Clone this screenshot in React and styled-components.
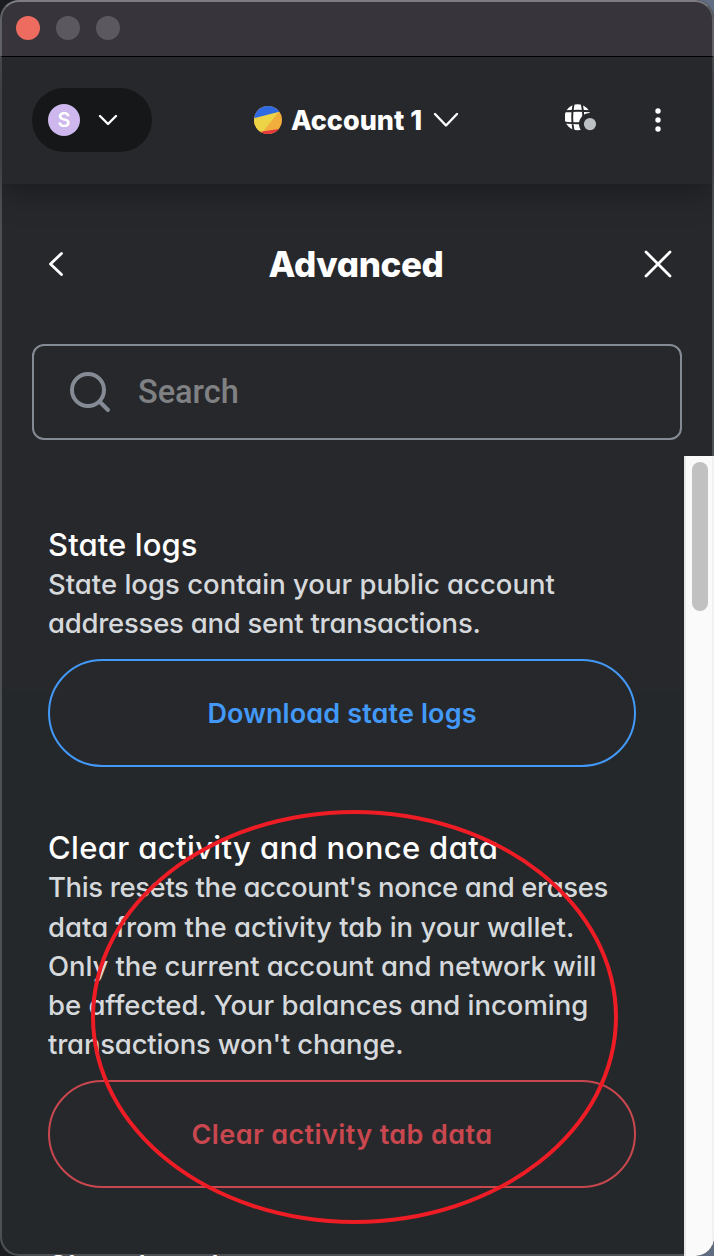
import React from "react";
import styled, { createGlobalStyle } from "styled-components";

const Global = createGlobalStyle`
  * { box-sizing: border-box; }
  html, body { margin: 0; height: 1256px; overflow: hidden; }
  body {
    font-family: Inter, "Liberation Sans", sans-serif;
    font-feature-settings: "cv11" 1;
    background: linear-gradient(90deg, #1b1c1f 0 50%, #5f6c82 50%);
  }
  button { font: inherit; font-feature-settings: inherit; color: inherit; background: none; border: 0; padding: 0; }
  svg { display: block; }
`;

const Window = styled.main`
  position: relative;
  width: 714px;
  height: 1256px;
  border-radius: 19px;
  overflow: hidden;
  display: flex;
  flex-direction: column;
  background: linear-gradient(#27282c 0 692px, #24282b 692px);
  box-shadow: inset 0 0 0 2px #4d5053;
`;

const TitleBar = styled.div`
  position: relative;
  z-index: 1;
  flex: none;
  height: 57px;
  display: flex;
  align-items: center;
  gap: 16px;
  padding: 0 14px 2px;
  border: 2px solid #606165;
  border-top-color: #7d7c81;
  border-bottom: 1px solid #000;
  border-radius: 19px 19px 0 0;
  background: #37353b;
`;

const Light = styled.span`
  width: 24px;
  height: 24px;
  border-radius: 50%;
  background: ${(p) => p.$color};
`;

const Header = styled.header`
  flex: none;
  height: 127px;
  margin: 0 2px;
  padding: 0 30px 1px;
  display: grid;
  grid-template-columns: 120px 1fr 120px;
  align-items: center;
  background: #27282c;
  box-shadow: 0 4px 32px rgba(0, 0, 0, 0.4);
`;

const NetworkPicker = styled.button`
  height: 64px;
  width: 120px;
  padding: 0 16px;
  display: flex;
  align-items: center;
  gap: 18px;
  border-radius: 32px;
  background: #161719;
`;

const NetworkAvatar = styled.span`
  width: 32px;
  height: 32px;
  border-radius: 50%;
  display: grid;
  place-items: center;
  background: #cdb7ec;
  color: #fff;
  font-size: 20px;
  font-weight: 600;
`;

const AccountPicker = styled.button`
  display: flex;
  align-items: center;
  justify-content: center;
  color: #fff;
  font-size: 27px;
  font-weight: 800;
  svg:first-child { margin-right: 9px; }
  svg:last-child { margin: 0 1px 0 11px; }
`;

const HeaderActions = styled.div`
  display: flex;
  align-items: center;
  justify-content: space-between;
  padding: 0 21px 0 3px;
`;

const Line = styled.span`
  display: block;
  width: fit-content;
  white-space: nowrap;
  letter-spacing: ${(p) => p.$track || 0}px;
`;

const PageHeading = styled.div`
  flex: none;
  height: 160px;
  padding: 0 40px 0 44px;
  display: grid;
  grid-template-columns: 32px 1fr 32px;
  align-items: center;
  h1 {
    margin: 0 6px 0 0;
    color: #fff;
    font-size: 35px;
    font-weight: 800;
    display: flex;
    justify-content: center;
  }
`;

const SearchBox = styled.label`
  flex: none;
  height: 96px;
  margin: 0 32px;
  padding: 0 34px;
  display: flex;
  align-items: center;
  gap: 26px;
  border: 2px solid #858b94;
  border-radius: 12px;
  color: #808183;
  font: 500 32.5px Roboto, sans-serif;
`;

const Body = styled.div`
  flex: 1;
  min-height: 0;
  margin-top: 16px;
  display: flex;
`;

const Settings = styled.div`
  flex: 1;
  padding: 69px 48px 0;
  overflow: hidden;
`;

const Setting = styled.section`
  margin-bottom: 61px;
  &:nth-child(2) { margin-bottom: 59px; }
  h2 {
    margin: 0;
    height: 40px;
    color: #fff;
    font-size: 31px;
    font-weight: 450;
    line-height: 40px;
  }
  p {
    margin: 0 0 16px;
    color: #d6d9dc;
    font-size: 27.5px;
    font-weight: 450;
    line-height: 39.2px;
  }
`;

const PillButton = styled.button`
  width: 100%;
  height: 108px;
  display: grid;
  place-items: center;
  border: 2px solid ${(p) => p.$color};
  border-radius: 54px;
  background: #27282c;
  color: ${(p) => p.$color};
  font-size: 27px;
  font-weight: 600;
`;

const ScrollTrack = styled.div`
  flex: none;
  width: 30px;
  padding: 6px 4px 0 6px;
  border-left: 2px solid #e8e8e8;
  border-right: 2px solid #f2f2f2;
  background: #fafafa;
`;

const ScrollThumb = styled.div`
  width: 16px;
  height: 149px;
  border-radius: 8px;
  background: #c1c1c1;
`;

const Annotation = styled.div`
  position: absolute;
  left: 91px;
  top: 810px;
  width: 527px;
  height: 414px;
  border: 4px solid #ee1c24;
  border-radius: 50%;
`;

const Stroke = ({ w, h, d, color = "#fff", width = 2.4 }) => (
  <svg width={w} height={h} viewBox={`0 0 ${w} ${h}`} fill="none" stroke={color} strokeWidth={width} strokeLinecap="round" strokeLinejoin="round">
    <path d={d} />
  </svg>
);

const AccountIcon = () => (
  <svg width="28" height="28" viewBox="0 0 28 28">
    <clipPath id="disc"><circle cx="14" cy="14" r="14" /></clipPath>
    <g clipPath="url(#disc)">
      <path fill="#f2ae3d" d="M0 0h28v28H0z" />
      <path fill="#edd447" d="M0 11.5 25 5.5 7 28H0z" />
      <path fill="#2f6ae2" d="M0 0h28v5L0 12.2z" />
      <path fill="#e6393d" d="M0 26.8 28 22.5V28H0z" />
    </g>
  </svg>
);

const GlobeIcon = () => (
  <svg width="32" height="32" viewBox="0 0 32 32">
    <circle cx="12.6" cy="13.2" r="13" fill="#fff" />
    <g fill="none" stroke="#27282c" strokeWidth="1.9">
      <path d="M0 7.2Q13 6.2 26 7.2M0 18.6Q13 20 26 18.6M8.6 0Q5.8 13.5 8.6 27M16.8 0Q19.8 13.5 16.8 27" />
    </g>
    <circle cx="25" cy="20.1" r="11" fill="#27282c" />
    <circle cx="25" cy="20.1" r="6.1" fill="#bbc0c5" />
  </svg>
);

const MoreIcon = () => (
  <svg width="6" height="26" viewBox="0 0 6 26" fill="#fff">
    <circle cx="3" cy="4" r="2.7" /><circle cx="3" cy="13" r="2.7" /><circle cx="3" cy="22" r="2.7" />
  </svg>
);

const SearchIcon = () => (
  <svg width="44" height="44" viewBox="0 0 44 44" fill="none" stroke="#858b94" strokeWidth="4" strokeLinecap="round">
    <circle cx="20" cy="20" r="16" /><path d="M32 32 40 40" />
  </svg>
);

const settings = [
  {
    title: ["State logs", 0.1],
    text: [["State logs contain your public account", 0], ["addresses and sent transactions.", -0.25]],
    action: ["Download state logs", 0.12],
    color: "#4299f7",
  },
  {
    title: ["Clear activity and nonce data", 0.36],
    text: [
      ["This resets the account's nonce and erases", -0.38],
      ["data from the activity tab in your wallet.", 0.02],
      ["Only the current account and network will", -0.09],
      ["be affected. Your balances and incoming", -0.03],
      ["transactions won't change.", -0.19],
    ],
    action: ["Clear activity tab data", 0.4],
    color: "#c9474e",
  },
  { title: ["Show hex data", -0.1], text: [] },
];

export default function App() {
  return (
    <>
      <Global />
      <Window>
        <TitleBar>
          <Light $color="#ee6b60" />
          <Light $color="#5b595f" />
          <Light $color="#5b595f" />
        </TitleBar>
        <Header>
          <NetworkPicker>
            <NetworkAvatar>S</NetworkAvatar>
            <Stroke w={20} h={12} d="M2 2 10 10 18 2" />
          </NetworkPicker>
          <AccountPicker>
            <AccountIcon />
            <Line>Account 1</Line>
            <Stroke w={26} h={16} d="M2 2 13 13.5 24 2" />
          </AccountPicker>
          <HeaderActions>
            <GlobeIcon />
            <MoreIcon />
          </HeaderActions>
        </Header>
        <PageHeading>
          <Stroke w={24} h={28} d="M17.5 3.5 6.5 14 17.5 24.5" width={2.8} />
          <h1><Line $track={-0.4}>Advanced</Line></h1>
          <Stroke w={32} h={28} d="M4 2 28 26M28 2 4 26" width={2.8} />
        </PageHeading>
        <SearchBox>
          <SearchIcon />
          <Line>Search</Line>
        </SearchBox>
        <Body>
          <Settings>
            {settings.map(({ title, text, action, color }) => (
              <Setting key={title[0]}>
                <h2><Line $track={title[1]}>{title[0]}</Line></h2>
                <p>{text.map(([line, track]) => <Line key={line} $track={track}>{line}</Line>)}</p>
                {action && (
                  <PillButton $color={color}><Line $track={action[1]}>{action[0]}</Line></PillButton>
                )}
              </Setting>
            ))}
          </Settings>
          <ScrollTrack><ScrollThumb /></ScrollTrack>
        </Body>
        <Annotation />
      </Window>
    </>
  );
}
